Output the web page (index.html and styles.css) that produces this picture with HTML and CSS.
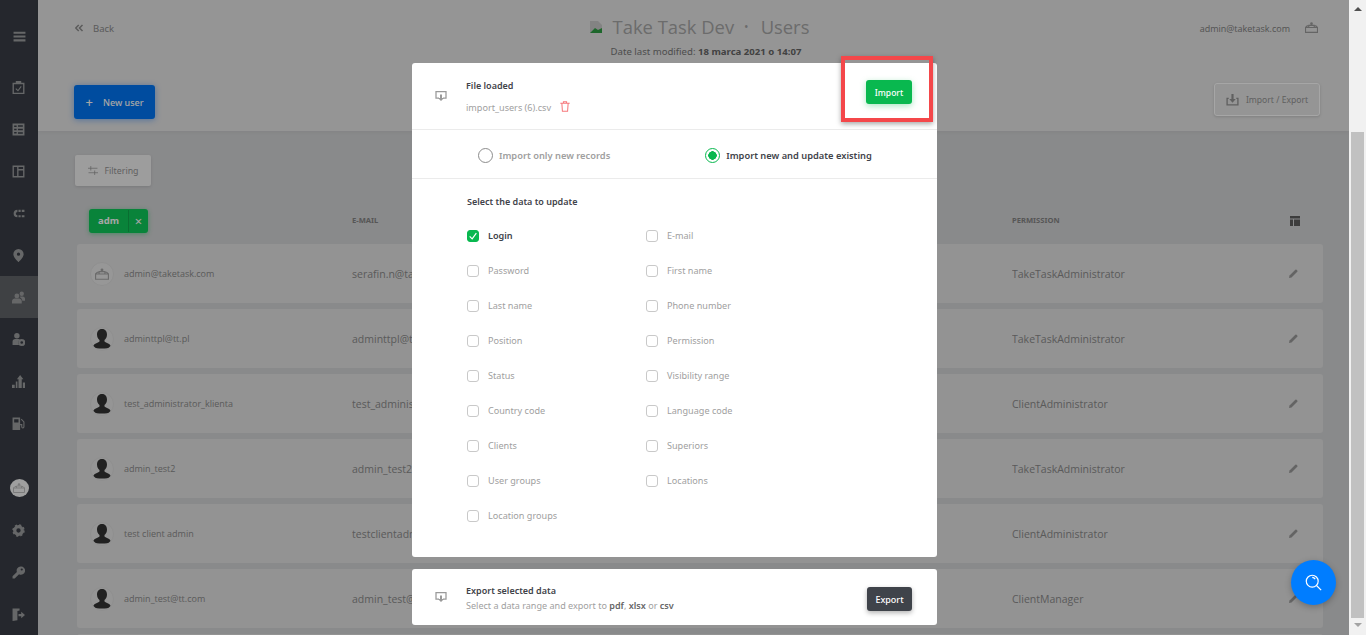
FILE: index.html
```html
<!DOCTYPE html>
<html lang="en">
<head>
<meta charset="utf-8">
<title>Take Task Dev - Users</title>
<link rel="stylesheet" href="styles.css">
</head>
<body>
<div class="app">
  <div class="page">
    <nav class="sidebar">
      <a class="nav nav-menu"><svg class="ico" viewBox="0 0 24 24"><path d="M1 3h22v4H1zM1 10h22v4H1zM1 17h22v4H1z"/></svg></a>
      <a class="nav"><svg class="ico" viewBox="0 0 24 24"><path fill-rule="evenodd" d="M1 3h6V0h10v3h6v21H1zM3.500 6v15.500h17V6z"/><path class="ln" d="M7 14l4 4 6-8"/></svg></a>
      <a class="nav"><svg class="ico" viewBox="0 0 24 24"><path fill-rule="evenodd" d="M1 1h22v22H1zM11 4v3h9V4zM11 10.500v3h9v-3zM11 17v3h9v-3zM4 4.500v3h4.500v-3zM4 10.500v3h4.500v-3zM4 16.500v3h4.500v-3z"/></svg></a>
      <a class="nav"><svg class="ico" viewBox="0 0 24 24"><path fill-rule="evenodd" d="M1 1h22v22H1zM3.500 3.500v17h6v-17zM12 3.500v4h8.500v-4zM12 10v10.500h8.500V10z"/></svg></a>
      <a class="nav"><svg class="ico" viewBox="0 0 24 24"><path d="M10 5a7 7 0 0 0 0 14v-4a3 3 0 0 1 0-6zM12 5h4v4h-4zM18 5h5v4h-5zM12 15h4v4h-4zM18 15h5v4h-5z"/></svg></a>
      <a class="nav"><svg class="ico" viewBox="0 0 24 24"><path fill-rule="evenodd" d="M12 0a9.500 9.500 0 0 0-9.500 9.500C2.500 16 12 24 12 24s9.500-8 9.500-14.500A9.500 9.500 0 0 0 12 0zm0 6.500a3 3 0 1 1 0 6 3 3 0 0 1 0-6z"/></svg></a>
      <a class="nav nav-active"><svg class="ico" viewBox="0 0 24 24"><circle cx="9" cy="9" r="4.500"/><circle cx="18" cy="5" r="4"/><path d="M0 23v-4c0-3 3-5 5-5h8c2 0 5 2 5 5v4z"/><path d="M15 10h5c2 0 4 2 4 4v4h-5c0-3-2-5-4-6z"/></svg></a>
      <a class="nav"><svg class="ico" viewBox="0 0 24 24"><circle cx="9" cy="5" r="5"/><path d="M1 22v-6c0-3 2-5 5-5h6c1 0 2 .5 3 1a7 7 0 0 0-2 10z"/><path fill-rule="evenodd" d="M18 11a6.500 6.500 0 1 0 0 13 6.500 6.500 0 0 0 0-13zm0 4a2.500 2.500 0 1 1 0 5 2.500 2.500 0 0 1 0-5z"/></svg></a>
      <a class="nav"><svg class="ico" viewBox="0 0 24 24"><path d="M0 18h5v6H0zM15 0l6 8h-3v16h-6V8H9zM20 14h4v10h-4zM7 12h3v12H7z"/></svg></a>
      <a class="nav"><svg class="ico" viewBox="0 0 24 24"><path fill-rule="evenodd" d="M1 1h14v23H1zM4 4v6h8V4z"/><path class="ln" d="M17 4l5 5v9c0 3-4 3-4 0v-4h-3"/></svg></a>
      <a class="nav nav-me"><span class="me-circle"><svg class="logo-sm" viewBox="0 0 24 20"><path class="ln" d="M1 10h22v9H1zM1 10l3-3h3M23 10l-3-3h-3M7 10V6h10v4"/><circle cx="12" cy="3" r="2.500"/></svg></span></a>
      <a class="nav"><svg class="ico" viewBox="0 0 24 24"><circle class="gear-in" cx="12" cy="12" r="7"/><circle class="gear-out" cx="12" cy="12" r="10"/></svg></a>
      <a class="nav"><svg class="ico" viewBox="0 0 24 24"><path fill-rule="evenodd" d="M16 1a7.500 7.500 0 0 0-7 10L1 19v4h4l8-8a7.500 7.500 0 1 0 3-14zm2 3.500a2 2 0 1 1 0 4 2 2 0 0 1 0-4z"/></svg></a>
      <a class="nav"><svg class="ico" viewBox="0 0 24 24"><path d="M1 1h13v3.500l-4 1v17L1 24zM12 11h5V7l7 6-7 6v-4h-5z"/></svg></a>
    </nav>

    <main class="main">
      <header class="header">
        <div class="top">
          <a class="back"><svg class="back-ico" viewBox="0 0 12 10"><path class="ln" d="M5 1L1 5l4 4M10 1L6 5l4 4"/></svg>Back</a>
          <div class="heading">
            <h1 class="title"><svg class="brk" viewBox="0 0 14 14"><path class="brk-a" d="M1 1h8l4 4v8H1z"/><path class="brk-b" d="M1 13l5-5 3 2 4-2v5z"/></svg>Take Task Dev<span class="dot">•</span>Users</h1>
            <p class="modified">Date last modified: <b>18 marca 2021 o 14:07</b></p>
          </div>
          <div class="user"><span>admin@taketask.com</span><svg class="logo-md" viewBox="0 0 24 20"><path class="ln" d="M1 10h22v9H1zM1 10l3-3h3M23 10l-3-3h-3M7 10V6h10v4"/><circle cx="12" cy="3" r="2.500"/></svg></div>
        </div>
        <div class="actions">
          <button class="btn-new"><span class="plus">+</span>New user</button>
          <button class="btn-ie"><svg class="ie-ico" viewBox="0 0 24 24"><path class="ln2" d="M5 10H2v12h20V10h-3"/><path d="M10 2h4v9h4l-6 7-6-7h4z"/></svg>Import / Export</button>
        </div>
      </header>

      <section class="content">
        <button class="btn-filter"><svg class="filter-ico" viewBox="0 0 18 18"><path class="ln1" d="M0 5h17M5 1v8M1 13h17M12 9v8"/></svg>Filtering</button>
        <div class="grid thead">
          <div class="tag-cell"><span class="tag"><span class="tag-t">adm</span><span class="tag-x">×</span></span></div>
          <div class="th">E-MAIL</div>
          <div class="th">PERMISSION</div>
          <div class="act"><svg class="cols" viewBox="0 0 10 10"><path d="M0 0h10v2.500H0zM0 3.500h3V10H0zM4 3.500h6V10H4z"/></svg></div>
        </div>

        <div class="grid row">
          <div class="cell-user"><span class="avatar avatar-logo"><svg class="logo-row" viewBox="0 0 24 20"><path class="ln" d="M1 10h22v9H1zM1 10l3-3h3M23 10l-3-3h-3M7 10V6h10v4"/><circle cx="12" cy="3" r="2.500"/></svg></span><span class="uname">admin@taketask.com</span></div>
          <div class="td">serafin.n@taketask.com</div><div class="td">TakeTaskAdministrator</div>
          <div class="act"><svg class="pen" viewBox="0 0 10 10"><path d="M0 10l.6-2.800L7 .8a1 1 0 0 1 1.400 0l.8.8a1 1 0 0 1 0 1.400L2.800 9.400z"/></svg></div>
        </div>
        <div class="grid row">
          <div class="cell-user"><span class="avatar"><svg class="person" viewBox="2 2 20 21"><path d="M12 3c-3.500 0-5 2.600-5 5.500 0 2.300 1 4.300 2.500 5.500v1.500c-1.500 1.400-6 2-6.500 5.500 2 1 5 1.500 9 1.500s7-.5 9-1.500c-.5-3.500-5-4.100-6.500-5.500V14c1.500-1.200 2.500-3.200 2.500-5.500C17 5.600 15.500 3 12 3z"/></svg></span><span class="uname">adminttpl@tt.pl</span></div>
          <div class="td">adminttpl@tt.pl</div><div class="td">TakeTaskAdministrator</div>
          <div class="act"><svg class="pen" viewBox="0 0 10 10"><path d="M0 10l.6-2.800L7 .8a1 1 0 0 1 1.400 0l.8.8a1 1 0 0 1 0 1.400L2.800 9.400z"/></svg></div>
        </div>
        <div class="grid row">
          <div class="cell-user"><span class="avatar"><svg class="person" viewBox="2 2 20 21"><path d="M12 3c-3.500 0-5 2.600-5 5.500 0 2.300 1 4.300 2.500 5.500v1.500c-1.500 1.400-6 2-6.500 5.500 2 1 5 1.500 9 1.500s7-.5 9-1.500c-.5-3.500-5-4.100-6.500-5.500V14c1.500-1.200 2.500-3.200 2.500-5.500C17 5.600 15.500 3 12 3z"/></svg></span><span class="uname">test_administrator_klienta</span></div>
          <div class="td">test_administrator</div><div class="td">ClientAdministrator</div>
          <div class="act"><svg class="pen" viewBox="0 0 10 10"><path d="M0 10l.6-2.800L7 .8a1 1 0 0 1 1.400 0l.8.8a1 1 0 0 1 0 1.400L2.800 9.400z"/></svg></div>
        </div>
        <div class="grid row">
          <div class="cell-user"><span class="avatar"><svg class="person" viewBox="2 2 20 21"><path d="M12 3c-3.500 0-5 2.600-5 5.500 0 2.300 1 4.300 2.500 5.500v1.500c-1.500 1.400-6 2-6.500 5.500 2 1 5 1.500 9 1.500s7-.5 9-1.500c-.5-3.500-5-4.100-6.500-5.500V14c1.500-1.200 2.500-3.200 2.500-5.500C17 5.600 15.500 3 12 3z"/></svg></span><span class="uname">admin_test2</span></div>
          <div class="td">admin_test2@tt.com</div><div class="td">TakeTaskAdministrator</div>
          <div class="act"><svg class="pen" viewBox="0 0 10 10"><path d="M0 10l.6-2.800L7 .8a1 1 0 0 1 1.400 0l.8.8a1 1 0 0 1 0 1.400L2.800 9.400z"/></svg></div>
        </div>
        <div class="grid row">
          <div class="cell-user"><span class="avatar"><svg class="person" viewBox="2 2 20 21"><path d="M12 3c-3.500 0-5 2.600-5 5.500 0 2.300 1 4.300 2.500 5.500v1.500c-1.500 1.400-6 2-6.500 5.500 2 1 5 1.500 9 1.500s7-.5 9-1.500c-.5-3.500-5-4.100-6.500-5.500V14c1.500-1.200 2.500-3.200 2.500-5.500C17 5.600 15.500 3 12 3z"/></svg></span><span class="uname">test client admin</span></div>
          <div class="td">testclientadmin@tt.com</div><div class="td">ClientAdministrator</div>
          <div class="act"><svg class="pen" viewBox="0 0 10 10"><path d="M0 10l.6-2.800L7 .8a1 1 0 0 1 1.400 0l.8.8a1 1 0 0 1 0 1.400L2.800 9.400z"/></svg></div>
        </div>
        <div class="grid row">
          <div class="cell-user"><span class="avatar"><svg class="person" viewBox="2 2 20 21"><path d="M12 3c-3.500 0-5 2.600-5 5.500 0 2.300 1 4.300 2.500 5.500v1.500c-1.500 1.400-6 2-6.500 5.500 2 1 5 1.500 9 1.500s7-.5 9-1.500c-.5-3.500-5-4.100-6.500-5.500V14c1.500-1.200 2.500-3.200 2.500-5.500C17 5.600 15.500 3 12 3z"/></svg></span><span class="uname">admin_test@tt.com</span></div>
          <div class="td">admin_test@tt.com</div><div class="td">ClientManager</div>
          <div class="act"><svg class="pen" viewBox="0 0 10 10"><path d="M0 10l.6-2.800L7 .8a1 1 0 0 1 1.400 0l.8.8a1 1 0 0 1 0 1.400L2.800 9.400z"/></svg></div>
        </div>
        <div class="grid row"></div>
      </section>
    </main>

    <div class="overlay"></div>

    <div class="dialogs">
      <div class="card card-import">
        <div class="file">
          <svg class="dl" viewBox="0 0 24 24"><path class="ln2" d="M8 16H2V3h20v13h-6"/><path d="M10 9h4v7h4l-6 6-6-6h4z"/></svg>
          <div class="file-info">
            <div class="strong">File loaded</div>
            <div class="file-name"><span>import_users (6).csv</span><svg class="trash" viewBox="0 0 12 14"><path class="ln1" d="M0 3h12M4 3V1h4v2M2 3l.7 10h6.600L10 3"/></svg></div>
          </div>
          <button class="btn-import">Import</button>
          <div class="highlight"></div>
        </div>
        <div class="modes">
          <label class="mode"><span class="radio"></span>Import only new records</label>
          <label class="mode mode-on"><span class="radio radio-on"></span>Import new and update existing</label>
        </div>
        <div class="fields">
          <div class="strong">Select the data to update</div>
          <div class="checks">
            <label class="check check-on"><span class="box box-on"><svg class="tick" viewBox="0 0 12 12"><path d="M2 6.500l3 3 5-7"/></svg></span>Login</label>
            <label class="check"><span class="box"></span>E-mail</label>
            <label class="check"><span class="box"></span>Password</label>
            <label class="check"><span class="box"></span>First name</label>
            <label class="check"><span class="box"></span>Last name</label>
            <label class="check"><span class="box"></span>Phone number</label>
            <label class="check"><span class="box"></span>Position</label>
            <label class="check"><span class="box"></span>Permission</label>
            <label class="check"><span class="box"></span>Status</label>
            <label class="check"><span class="box"></span>Visibility range</label>
            <label class="check"><span class="box"></span>Country code</label>
            <label class="check"><span class="box"></span>Language code</label>
            <label class="check"><span class="box"></span>Clients</label>
            <label class="check"><span class="box"></span>Superiors</label>
            <label class="check"><span class="box"></span>User groups</label>
            <label class="check"><span class="box"></span>Locations</label>
            <label class="check"><span class="box"></span>Location groups</label>
          </div>
        </div>
      </div>
      <div class="card card-export">
        <svg class="dl" viewBox="0 0 24 24"><path class="ln2" d="M8 16H2V3h20v13h-6"/><path d="M10 9h4v7h4l-6 6-6-6h4z"/></svg>
        <div class="export-info">
          <div class="strong">Export selected data</div>
          <div class="export-sub">Select a data range and export to <b>pdf</b>, <b>xlsx</b> or <b>csv</b></div>
        </div>
        <button class="btn-export">Export</button>
      </div>
    </div>

    <button class="fab"><svg class="fab-ico" viewBox="0 0 20 20"><circle cx="8.500" cy="8.500" r="7"/><path d="M13.500 13.500L19 19M8.500 4a4.500 4.500 0 0 1 3.500 2"/></svg></button>
  </div>

  <aside class="scrollbar">
    <span class="arrow-up"></span>
    <span class="thumb"></span>
    <span class="arrow-down"></span>
  </aside>
</div>
</body>
</html>
```

FILE: styles.css
```css
* { box-sizing: border-box; }
html, body { margin: 0; height: 635px; overflow: hidden; }
body { font-family: "Noto Sans", "Open Sans", sans-serif; color: #808080; }
button { font-family: inherit; border: 0; cursor: pointer; }
p, h1 { margin: 0; }
.ln { fill: none; stroke: currentColor; stroke-width: 2; }
.ln1 { fill: none; stroke: currentColor; stroke-width: 1.300; }
.ln2 { fill: none; stroke: currentColor; stroke-width: 2.500; }

.app { display: flex; width: 1366px; height: 635px; }
.page { position: relative; display: flex; width: 1349px; height: 635px; overflow: hidden; }

/* Sidebar */
.sidebar { width: 38px; flex: none; background: #393d45; display: flex; flex-direction: column; padding-top: 15px; color: #9d9ea0; }
.nav { height: 42px; display: flex; align-items: center; justify-content: center; padding-right: 2px; }
.ico { width: 13px; height: 13px; fill: currentColor; }
.nav-menu { margin-bottom: 9px; padding-right: 0; }
.nav-active { background: #616469; }
.nav-me { margin-top: 23px; padding-right: 0; }
.me-circle { width: 19px; height: 18px; border-radius: 50%; background: #f4f4f4; display: flex; align-items: center; justify-content: center; color: #bdbdbd; }
.logo-sm { width: 12px; height: 10px; fill: currentColor; }
.gear-in { fill: none; stroke: currentColor; stroke-width: 6; }
.gear-out { fill: none; stroke: currentColor; stroke-width: 3; stroke-dasharray: 4 3.850; }

/* Main */
.main { flex: 1; min-width: 0; background: #d3d4d6; display: flex; flex-direction: column; }
.header { height: 131px; flex: none; background: #e5e5e5; padding: 13px 29px 0 36px; box-shadow: 0 1px 4px rgba(0,0,0,.06); }
.top { display: grid; grid-template-columns: 1fr 230px 1fr; align-items: start; }
.back { display: flex; align-items: center; gap: 9px; height: 30px; font-size: 9.500px; color: #8c8c8c; padding-left: 1px; }
.back-ico { width: 9px; height: 8px; }
.heading { margin-left: 4px; white-space: nowrap; display: flex; flex-direction: column; align-items: center; }
.title { font-family: "Open Sans", "Noto Sans", sans-serif; font-size: 18.400px; line-height: 27px; font-weight: 400; color: #a6a6a6; display: flex; align-items: center; }
.brk { width: 14px; height: 14px; margin-right: 10px; }
.brk-a { fill: #c9c9c9; }
.brk-b { fill: #2f9e44; }
.dot { margin: 0 12px 0 10px; font-size: 12px; }
.modified { font-size: 9.600px; line-height: 14px; margin: 5px 0 0 14px; color: #777; }
.modified b { font-weight: 700; color: #666; }
.user { display: flex; justify-content: flex-end; align-items: center; gap: 15px; height: 30px; font-family: "Open Sans", "Noto Sans", sans-serif; font-size: 9px; color: #808080; }
.logo-md { width: 13px; height: 11px; fill: #9c9c9c; color: #9c9c9c; margin: 0 2px 2px 0; }

.actions { display: flex; justify-content: space-between; align-items: flex-start; margin-top: 24px; }
.btn-new { margin-top: 2px; width: 81px; height: 34px; border-radius: 3px; background: #0076f4; color: #fff; font-size: 9px; font-weight: 500; display: flex; align-items: center; justify-content: center; gap: 10px; box-shadow: 0 1px 6px rgba(0,110,255,.45); }
.plus { font-size: 13px; line-height: 1; }
.btn-ie { width: 106px; height: 33px; border-radius: 3px; border: 1px solid #fff; background: #e5e5e5; color: #949494; font-size: 8.600px; display: flex; align-items: center; justify-content: center; gap: 7px; box-shadow: 0 1px 3px rgba(0,0,0,.15); }
.ie-ico { width: 13px; height: 13px; fill: currentColor; }

.content { padding: 24px 26px 0 39px; }
.btn-filter { margin-left: -2px; width: 76px; height: 31px; border-radius: 2px; background: #f1f1f1; color: #949494; font-size: 8.800px; display: flex; align-items: center; justify-content: center; gap: 7px; box-shadow: 0 1px 3px rgba(0,0,0,.12); }
.filter-ico { width: 10px; height: 11px; }

.grid { display: grid; grid-template-columns: 275px 660px 1fr 34px; align-items: center; }
.thead { height: 24px; margin-top: 23px; margin-bottom: 11px; }
.tag-cell { padding-left: 12px; display: flex; }
.tag { display: flex; height: 24px; width: 59px; border-radius: 3px; background: #0fc95a; color: #fff; font-size: 9.500px; font-weight: 700; align-items: center; box-shadow: 0 1px 5px rgba(0,200,80,.45); }
.tag-t { width: 40px; text-align: center; border-right: 1px solid #0eaa4c; line-height: 22px; }
.tag-x { flex: 1; text-align: center; font-weight: 400; font-size: 13px; line-height: 22px; }
.th { font-size: 7.600px; font-weight: 700; color: #858585; padding-bottom: 3px; }
.act { display: flex; }
.cols { width: 10px; height: 10px; fill: #5e5e5e; margin: 0 0 0 1px; }
.row { height: 59px; margin-bottom: 6px; border-radius: 3px; background: #e2e2e2; }
.cell-user { display: flex; align-items: center; padding-left: 13px; gap: 10px; }
.avatar { width: 24px; height: 24px; border-radius: 50%; background: #e5e5e5; border: 1px solid #dcdcdc; display: flex; align-items: center; justify-content: center; flex: none; overflow: hidden; }
.avatar-logo { background: #e9e9e9; color: #a5a5a5; }
.logo-row { width: 14px; height: 12px; fill: currentColor; }
.person { width: 20px; height: 21px; fill: #333; }
.uname { font-family: "Open Sans", "Noto Sans", sans-serif; font-size: 9px; color: #8b8b8b; white-space: nowrap; }
.td { font-family: "Open Sans", "Noto Sans", sans-serif; font-size: 10.500px; color: #8b8b8b; white-space: nowrap; overflow: hidden; }
.pen { width: 9px; height: 9px; fill: #9a9a9a; }

/* Overlay */
.overlay { position: absolute; inset: 0; background: rgba(0,0,0,.35); }

/* Dialogs */
.dialogs { position: absolute; left: 412px; top: 63px; width: 525px; display: flex; flex-direction: column; gap: 12px; }
.card { background: #fff; border-radius: 3px; color: #3e434b; }
.card-import { height: 494px; }
.strong { font-size: 9px; font-weight: 600; color: #3f434a; }
.dl { width: 12px; height: 12px; fill: #9a9a9a; color: #9a9a9a; flex: none; }
.file { position: relative; height: 67px; border-bottom: 1px solid #ebebeb; display: flex; align-items: center; padding: 0 25px 0 23px; }
.file-info { flex: 1; margin-left: 19px; padding-top: 1px; }
.file-name { display: flex; align-items: center; gap: 9px; font-size: 9.100px; color: #a0a0a0; margin-top: 9px; }
.trash { width: 10px; height: 11px; color: #f6787c; margin-top: -3px; }
.btn-import { width: 46px; height: 24px; border-radius: 3px; background: #09b84f; color: #fff; font-size: 8.500px; font-weight: 500; padding: 0; box-shadow: 0 2px 6px rgba(9,184,79,.35); margin-top: -8px; }
.highlight { position: absolute; left: 429px; top: -7px; width: 92px; height: 66px; border: 4px solid #f4474a; box-shadow: 0 2px 5px rgba(0,0,0,.35); }
.modes { height: 49px; border-bottom: 1px solid #ebebeb; display: flex; align-items: center; padding: 2px 0 0 66px; gap: 95px; font-size: 9.300px; font-weight: 600; color: #a0a0a0; }
.mode { display: flex; align-items: center; gap: 6px; white-space: nowrap; }
.mode-on { color: #3f434a; }
.radio { width: 15px; height: 15px; border-radius: 50%; border: 1px solid #8c8c8c; display: block; flex: none; }
.radio-on { border-color: #09b84f; background: radial-gradient(circle, #09b84f 0 4px, #fff 4.500px); }
.fields { padding: 16px 0 0 55px; }
.checks { display: grid; grid-template-columns: 179px 1fr; grid-auto-rows: 35px; margin-top: 10px; }
.check { display: flex; align-items: center; gap: 9px; font-size: 9.100px; color: #a0a0a0; white-space: nowrap; }
.check-on { color: #3f434a; font-weight: 600; }
.box { width: 12px; height: 12px; border-radius: 3px; border: 1px solid #c9c9c9; flex: none; display: block; }
.box-on { background: #09b84f; border-color: #09b84f; display: flex; align-items: center; justify-content: center; }
.tick { width: 10px; height: 10px; fill: none; stroke: #fff; stroke-width: 1.400; }
.card-export { height: 56px; display: flex; align-items: center; padding: 0 25px 0 23px; }
.export-info { flex: 1; margin-left: 19px; padding-top: 2px; }
.export-sub { font-size: 9.060px; color: #a0a0a0; margin-top: 2px; }
.export-sub b { color: #666; font-weight: 600; }
.btn-export { width: 45px; height: 24px; border-radius: 3px; background: #3f434a; color: #fff; font-size: 9px; font-weight: 500; padding: 0; box-shadow: 0 2px 5px rgba(0,0,0,.3); margin-top: 4px; }

/* Floating search */
.fab { position: absolute; left: 1291px; top: 560px; width: 45px; height: 45px; border-radius: 50%; background: #007dff; padding: 0; display: flex; align-items: center; justify-content: center; box-shadow: 0 2px 6px rgba(0,0,0,.25); }
.fab-ico { width: 17px; height: 17px; fill: none; stroke: #fff; stroke-width: 1.400; }

/* Scrollbar */
.scrollbar { width: 17px; flex: none; background: #f1f1f1; display: flex; flex-direction: column; align-items: center; padding-top: 7px; }
.arrow-up { width: 0; height: 0; border: 4px solid transparent; border-top: 0; border-bottom: 4px solid #505050; }
.thumb { width: 13px; height: 486px; background: #c1c1c1; margin-top: 121px; }
.arrow-down { width: 0; height: 0; border: 4px solid transparent; border-bottom: 0; border-top: 4px solid #a3a3a3; margin-top: 5px; }
```
